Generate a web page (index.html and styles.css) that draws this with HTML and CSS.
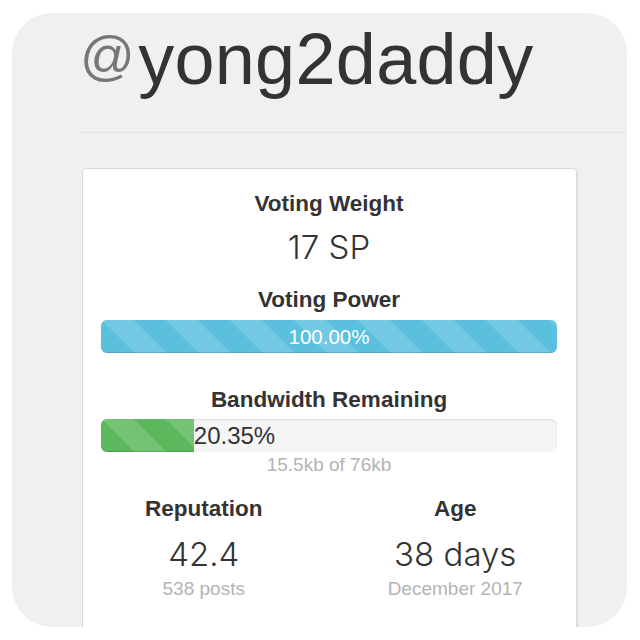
FILE: index.html
```html
<!DOCTYPE html>
<html>
<head>
<meta charset="utf-8">
<link rel="stylesheet" href="styles.css">
</head>
<body>
<div class="frame">
  <h1 class="handle"><span class="at">@</span>yong2daddy</h1>
  <div class="divider"></div>
  <div class="card">
    <div class="label first">Voting Weight</div>
    <div class="value">17 SP</div>
    <div class="label gap-lg">Voting Power</div>
    <div class="track">
      <div class="fill fill-blue" style="width:100%">100.00%</div>
    </div>
    <div class="label gap-xl">Bandwidth Remaining</div>
    <div class="track">
      <div class="fill fill-green" style="width:20.35%"></div>
      <span class="track-label">20.35%</span>
    </div>
    <div class="sub sub-tight">15.5kb of 76kb</div>
    <div class="cols">
      <div class="col">
        <div class="label">Reputation</div>
        <div class="value value-col">42.4</div>
        <div class="sub">538 posts</div>
      </div>
      <div class="col">
        <div class="label">Age</div>
        <div class="value value-col">38 days</div>
        <div class="sub">December 2017</div>
      </div>
    </div>
  </div>
</div>
</body>
</html>
```

FILE: styles.css
```css
html, body {
  margin: 0;
  padding: 0;
  background: #ffffff;
}
body {
  font-family: "Liberation Sans", Arial, sans-serif;
  color: #333333;
}
.frame {
  margin: 13px 13px 0 12px;
  height: 614px;
  background: #f0f0f0;
  border-radius: 40px;
  overflow: hidden;
}
.handle {
  margin: 6px 0 0 68px;
  height: 80px;
  font-size: 72px;
  line-height: 80px;
  font-weight: normal;
  color: #333333;
  letter-spacing: 0.3px;
}
.handle .at {
  font-size: 54px;
  line-height: 0;
  vertical-align: 10px;
  margin-right: 3px;
  color: #777777;
}
.divider {
  margin: 33px 0 0 68px;
  border-top: 1px solid #e5e5e5;
}
.card {
  margin: 35px 0 0 70px;
  width: 495px;
  box-sizing: border-box;
  height: 470px;
  background: #ffffff;
  border: 1px solid #dadada;
  border-radius: 4px;
  box-shadow: 1px 1px 2px rgba(0, 0, 0, 0.08);
  padding: 0 19px 0 18px;
  text-align: center;
}
.label {
  font-size: 22.5px;
  line-height: 26px;
  font-weight: bold;
  color: #333333;
}
.label.first {
  margin-top: 22px;
}
.label.gap-lg {
  margin-top: 21px;
}
.label.gap-xl {
  margin-top: 34px;
}
.value {
  margin-top: 11px;
  font-family: Inter, "Liberation Sans", sans-serif;
  font-weight: 300;
  font-size: 33px;
  line-height: 38px;
  color: #333333;
}
.value.value-col {
  margin-top: 13px;
  font-size: 33px;
}
.track {
  margin-top: 7px;
  height: 33px;
  border-radius: 6px;
  background: #f5f5f5;
  box-shadow: inset 0 1px 2px rgba(0, 0, 0, 0.1);
  overflow: hidden;
  display: flex;
  align-items: stretch;
}
.label.gap-xl + .track {
  margin-top: 6px;
}
.fill {
  height: 100%;
  background-size: 64px 64px;
  background-image: linear-gradient(45deg,
    rgba(255, 255, 255, 0.15) 25%, transparent 25%,
    transparent 50%, rgba(255, 255, 255, 0.15) 50%,
    rgba(255, 255, 255, 0.15) 75%, transparent 75%, transparent);
  box-shadow: inset 0 -1px 0 rgba(0, 0, 0, 0.15);
}
.fill-blue {
  background-color: #5bc0de;
  color: #ffffff;
  font-size: 20.5px;
  line-height: 33px;
  text-align: center;
}
.fill-green {
  background-color: #5cb85c;
}
.track-label {
  font-size: 24px;
  line-height: 33px;
  color: #333333;
}
.sub {
  margin-top: 5px;
  font-size: 19px;
  line-height: 22px;
  color: #b4b4b4;
}
.sub.sub-tight {
  margin-top: 2px;
}
.cols {
  margin: 20px -24px 0 -23px;
  display: grid;
  grid-template-columns: 1fr 1fr;
}
```
